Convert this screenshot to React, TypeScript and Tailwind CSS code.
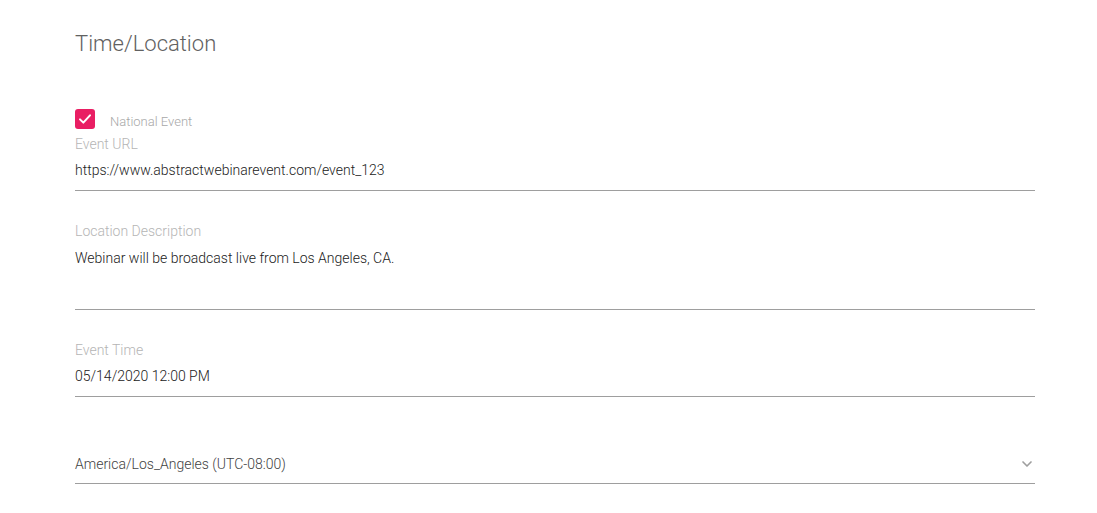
import React from "react";

export default function App() {
  return (
    <div className="min-h-[513px] w-full bg-white font-light" style={{ fontFamily: "Roboto, 'Liberation Sans', sans-serif" }}>
      <div className="ml-[75px] w-[960px] pt-[30px]">
        <h1 className="text-[22px] leading-[28px] font-light text-[#616161]">Time/Location</h1>

        <div className="mt-[51px] flex items-center h-[20px]">
          <div className="w-[20px] h-[20px] rounded-[3px] bg-[#e91e63] flex items-center justify-center">
            <svg width="16" height="16" viewBox="0 0 24 24" fill="none" stroke="white" strokeWidth="3" strokeLinecap="round" strokeLinejoin="round">
              <path d="M4.5 12.5l5 5L19.5 6.5" />
            </svg>
          </div>
          <span className="ml-[15px] text-[13px] leading-[16px] text-[#a8a8a8] mt-[6px]">National Event</span>
        </div>

        <div className="mt-[7px] text-[14px] leading-[16px] text-[#b5b5b5]">Event URL</div>
        <div className="mt-[8px] pb-[10px] border-b border-[#9e9e9e] text-[14px] leading-[20px] text-[#212121]">
          https://www.abstractwebinarevent.com/event_123
        </div>

        <div className="mt-[32px] text-[14px] leading-[16px] text-[#b5b5b5]">Location Description</div>
        <div className="mt-[9px] pb-[41px] border-b border-[#9e9e9e] text-[14px] leading-[20px] text-[#212121]">
          Webinar will be broadcast live from Los Angeles, CA.
        </div>

        <div className="mt-[32px] text-[14px] leading-[16px] text-[#b5b5b5]">Event Time</div>
        <div className="mt-[8px] pb-[10px] border-b border-[#9e9e9e] text-[14px] leading-[20px] text-[#212121]">
          05/14/2020 12:00 PM
        </div>

        <div className="mt-[57px] pb-[9px] border-b border-[#9e9e9e] flex items-center justify-between text-[14px] leading-[20px] text-[#424242]">
          <span>America/Los_Angeles (UTC-08:00)</span>
          <svg width="16" height="16" viewBox="0 0 24 24" fill="none" stroke="#9e9e9e" strokeWidth="2.5" strokeLinecap="round" strokeLinejoin="round">
            <path d="M6 9l6 6 6-6" />
          </svg>
        </div>
      </div>
    </div>
  );
}
